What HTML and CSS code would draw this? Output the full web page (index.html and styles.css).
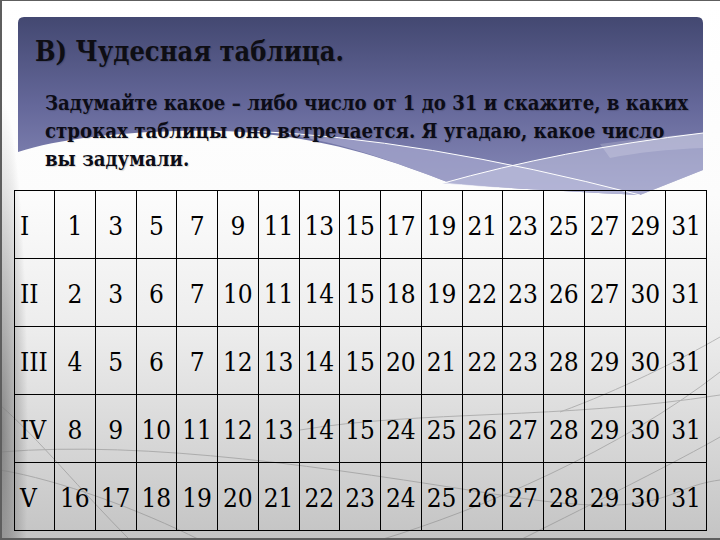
FILE: index.html
```html
<!DOCTYPE html>
<html lang="ru">
<head>
<meta charset="utf-8">
<title>Чудесная таблица</title>
<link rel="stylesheet" href="styles.css">
</head>
<body>
<div class="slide">
  <svg class="decor" width="720" height="540" viewBox="0 0 720 540" aria-hidden="true">
    <defs>
      <linearGradient id="navy" x1="0" y1="17" x2="0" y2="195" gradientUnits="userSpaceOnUse">
        <stop offset="0" stop-color="#434871"/>
        <stop offset="0.5" stop-color="#65689a"/>
        <stop offset="1" stop-color="#8a8cba"/>
      </linearGradient>
    </defs>
    <path d="M18,23 Q18,17 24,17 L697,17 Q703,17 703,23 L703,170 L640,195 C560,191 500,188 450,183 C390,160 320,134 220,131 C140,129 60,138 18,152 Z" fill="url(#navy)"/>
    <path d="M250,131 Q420,138 640,195 C560,191 500,188 450,183 C390,160 320,134 250,131 Z" fill="#a4a6cc" opacity="0.75"/>
    <path d="M440,184 Q560,150 703,133 L703,170 L640,195 C560,191 500,188 450,184 Z" fill="#c3c4e0" opacity="0.55"/>
    <path d="M600,144 Q650,137 703,133 L703,148 Q650,150 610,158 Z" fill="#ffffff" opacity="0.18"/>
    <path d="M250,131 Q420,138 640,195" fill="none" stroke="#ffffff" stroke-width="1"/>
    <path d="M440,184 Q560,150 703,133" fill="none" stroke="#ffffff" stroke-width="1"/>
    <g fill="none" stroke="#7c7c7c" stroke-width="1" opacity="0.45">
      <path d="M0,452 C150,440 330,468 500,495 S 660,488 720,480"/>
      <path d="M0,405 C40,440 80,490 130,540"/>
      <path d="M0,470 C60,480 140,510 200,540"/>
      <path d="M380,540 C480,510 620,450 720,372"/>
      <path d="M520,540 C600,500 680,460 720,437"/>
      <path d="M560,412 C620,390 680,360 720,337"/>
      <path d="M300,430 C420,410 560,420 720,395"/>
    </g>
  </svg>
  <div class="content">
    <h1 class="title">В) Чудесная таблица.</h1>
    <p class="task">Задумайте какое – либо число от 1 до 31 и скажите, в каких<br>строках таблицы оно встречается. Я угадаю, какое число<br>вы задумали.</p>
    <table class="grid">
      <colgroup>
        <col class="col-head">
        <col span="16" class="col-num">
      </colgroup>
      <tbody>
        <tr><td class="roman">I</td><td>1</td><td>3</td><td>5</td><td>7</td><td>9</td><td>11</td><td>13</td><td>15</td><td>17</td><td>19</td><td>21</td><td>23</td><td>25</td><td>27</td><td>29</td><td>31</td></tr>
        <tr><td class="roman">II</td><td>2</td><td>3</td><td>6</td><td>7</td><td>10</td><td>11</td><td>14</td><td>15</td><td>18</td><td>19</td><td>22</td><td>23</td><td>26</td><td>27</td><td>30</td><td>31</td></tr>
        <tr><td class="roman">III</td><td>4</td><td>5</td><td>6</td><td>7</td><td>12</td><td>13</td><td>14</td><td>15</td><td>20</td><td>21</td><td>22</td><td>23</td><td>28</td><td>29</td><td>30</td><td>31</td></tr>
        <tr><td class="roman">IV</td><td>8</td><td>9</td><td>10</td><td>11</td><td>12</td><td>13</td><td>14</td><td>15</td><td>24</td><td>25</td><td>26</td><td>27</td><td>28</td><td>29</td><td>30</td><td>31</td></tr>
        <tr><td class="roman">V</td><td>16</td><td>17</td><td>18</td><td>19</td><td>20</td><td>21</td><td>22</td><td>23</td><td>24</td><td>25</td><td>26</td><td>27</td><td>28</td><td>29</td><td>30</td><td>31</td></tr>
      </tbody>
    </table>
  </div>
</div>
</body>
</html>
```

FILE: styles.css
```css
html, body {
  margin: 0;
  padding: 0;
  background: #ffffff;
}

.slide {
  position: relative;
  width: 720px;
  height: 540px;
  box-sizing: border-box;
  overflow: hidden;
  border-left: 2px solid #5e5e5e;
  border-top: 1px solid #5e5e5e;
  border-bottom: 2px solid #5e5e5e;
  background:
    radial-gradient(26px 330px at 0 430px, rgba(70, 70, 70, 0.55), rgba(70, 70, 70, 0)),
    linear-gradient(180deg, #ffffff 0%, #fcfcfc 36%, #ececec 62%, #d4d4d4 85%, #c4c4c4 100%);
  font-family: "DejaVu Serif", serif;
  font-stretch: semi-condensed;
  color: #000;
}

.decor {
  position: absolute;
  left: -2px;
  top: -1px;
}

.content {
  position: relative;
  z-index: 1;
  padding-top: 32px;
}

.title {
  margin: 0 0 0 33px;
  font-size: 27px;
  line-height: 38px;
  font-weight: 700;
  color: #0e0e14;
  text-shadow: 1px 1px 1px rgba(0, 0, 0, 0.15);
}

.task {
  margin: 18px 0 0 43px;
  font-size: 20.2px;
  line-height: 28px;
  font-weight: 700;
  color: #0c0c16;
  white-space: nowrap;
  text-shadow: 1px 1px 1px rgba(0, 0, 0, 0.15);
}

.grid {
  margin: 17px 0 0 12px;
  width: 692px;
  table-layout: fixed;
  border-collapse: collapse;
  border: 1px solid #000;
}

.col-head {
  width: 40px;
}

.col-num {
  width: 40.75px;
}

.grid tr {
  height: 68px;
}

.grid td {
  border: 1px solid #000;
  padding: 3px 0 0 0;
  text-align: center;
  vertical-align: middle;
  font-size: 26px;
  line-height: 30px;
  white-space: nowrap;
}

.grid td.roman {
  text-align: left;
  padding-left: 5px;
}
```
